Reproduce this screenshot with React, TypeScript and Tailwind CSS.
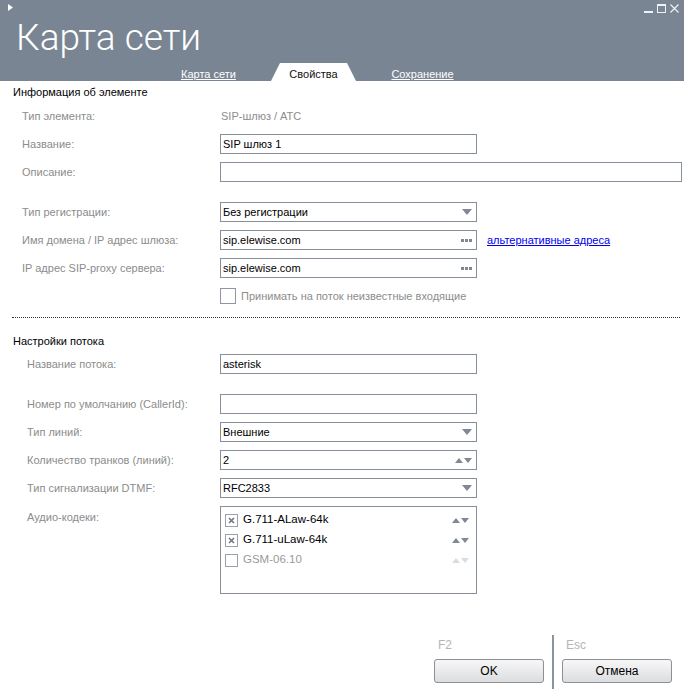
import React from "react";

const font = "font-['Liberation_Sans',Arial,sans-serif]";

function DownArrow({ light = false }: { light?: boolean }) {
  return (
    <svg width="10" height="6" viewBox="0 0 10 6" className="shrink-0">
      <path d="M0 0h10L5 6z" fill={light ? "#d4d8dd" : "#7f8894"} />
    </svg>
  );
}

function UpDown({ light = false }: { light?: boolean }) {
  const c = light ? "#d9dde2" : "#7f8894";
  return (
    <svg width="17" height="6" viewBox="0 0 17 6" className="shrink-0">
      <path d="M0 6L4 1l4 5z" fill={c} />
      <path d="M9 1h8l-4 5z" fill={c} />
    </svg>
  );
}

function Dots() {
  return (
    <svg width="11" height="3" viewBox="0 0 11 3" className="shrink-0">
      <rect x="0" y="0" width="3" height="3" fill="#7f8894" />
      <rect x="4" y="0" width="3" height="3" fill="#7f8894" />
      <rect x="8" y="0" width="3" height="3" fill="#7f8894" />
    </svg>
  );
}

function Field({
  value = "",
  wide = false,
  right,
}: {
  value?: string;
  wide?: boolean;
  right?: React.ReactNode;
}) {
  return (
    <div
      className={`flex h-[20px] items-center border border-[#858e99] bg-white pl-[2px] pr-[4px] text-[11px] text-black ${
        wide ? "w-[462px]" : "w-[257px]"
      }`}
    >
      <span className="flex-1 truncate">{value}</span>
      {right}
    </div>
  );
}

function Row({
  label,
  indent = "section1",
  children,
}: {
  label: string;
  indent?: "section1" | "section2";
  children?: React.ReactNode;
}) {
  return (
    <div className="flex h-[28px] items-center">
      <div
        className={`shrink-0 text-[11px] text-[#8c8c8c] ${
          indent === "section1" ? "w-[220px] pl-[22px]" : "w-[220px] pl-[27px]"
        }`}
      >
        {label}
      </div>
      {children}
    </div>
  );
}

function CodecItem({
  name,
  checked,
  disabled = false,
}: {
  name: string;
  checked: boolean;
  disabled?: boolean;
}) {
  return (
    <div className="flex h-[20px] items-center pl-[4px] pr-[7px]">
      <div className="flex h-[13px] w-[13px] items-center justify-center border border-[#9aa1aa] bg-white">
        {checked && (
          <svg width="7" height="7" viewBox="0 0 7 7">
            <path d="M1 1l5 5M6 1L1 6" stroke="#6f7680" strokeWidth="1.6" />
          </svg>
        )}
      </div>
      <span
        className={`ml-[5px] flex-1 text-[11.5px] ${disabled ? "text-[#9a9a9a]" : "text-black"}`}
      >
        {name}
      </span>
      <UpDown light={disabled} />
    </div>
  );
}

function Tab({ label, active = false }: { label: string; active?: boolean }) {
  if (active) {
    return (
      <div className="flex h-[18px] w-[85px] items-end justify-center bg-white text-[11px] leading-[14px] text-[#111] [clip-path:polygon(9px_0,76px_0,100%_100%,0_100%)]">
        {label}
      </div>
    );
  }
  return (
    <div className="flex h-[18px] w-[85px] items-end justify-center whitespace-nowrap text-[11px] leading-[14px] text-white underline">
      {label}
    </div>
  );
}

function Button({ label }: { label: string }) {
  return (
    <div className="flex h-[24px] w-[110px] items-center justify-center rounded-[3px] border border-[#8c9096] bg-gradient-to-b from-[#f7f7f7] to-[#dcdde0] text-[12px] text-black">
      {label}
    </div>
  );
}

export default function App() {
  return (
    <div className={`flex h-[694px] w-[684px] flex-col overflow-hidden bg-white ${font}`}>
      {/* Header */}
      <div className="flex h-[81px] shrink-0 flex-col bg-[#7a8594]">
        <div className="flex h-[18px] items-start justify-between pl-[8px] pr-[5px] pt-[4px]">
          <svg width="5" height="7" viewBox="0 0 5 7">
            <path d="M0 0l5 3.5L0 7z" fill="#ffffff" />
          </svg>
          <div className="flex items-center gap-[4px]">
            <svg width="9" height="9" viewBox="0 0 9 9">
              <rect x="0" y="7" width="9" height="2" fill="#eef0f3" />
            </svg>
            <svg width="9" height="9" viewBox="0 0 9 9">
              <rect x="0.5" y="0.5" width="8" height="8" fill="none" stroke="#eef0f3" strokeWidth="1" />
              <rect x="0" y="0" width="9" height="2" fill="#eef0f3" />
            </svg>
            <svg width="9" height="9" viewBox="0 0 9 9">
              <path d="M0.5 0.5l8 8M8.5 0.5l-8 8" stroke="#eef0f3" strokeWidth="1.2" />
            </svg>
          </div>
        </div>
        <div className="h-[40px] pl-[16px] font-['Roboto',sans-serif] text-[37px] font-light leading-[40px] text-white">
          Карта сети
        </div>
        <div className="mt-auto flex h-[18px] items-end pl-[166px]">
          <Tab label="Карта сети" />
          <div className="w-[20px]" />
          <Tab label="Свойства" active />
          <div className="w-[24px]" />
          <Tab label="Сохранение" />
        </div>
      </div>

      {/* Информация об элементе */}
      <div className="flex h-[23px] items-center pl-[13px] text-[11px] text-black">
        Информация об элементе
      </div>
      <div className="mt-[-2px]" />
      <Row label="Тип элемента:">
        <span className="pl-[1px] text-[11px] text-[#8c8c8c]">SIP-шлюз / АТС</span>
      </Row>
      <Row label="Название:">
        <Field value="SIP шлюз 1" />
      </Row>
      <Row label="Описание:">
        <Field wide />
      </Row>
      <div className="h-[12px]" />
      <Row label="Тип регистрации:">
        <Field value="Без регистрации" right={<DownArrow />} />
      </Row>
      <Row label="Имя домена / IP адрес шлюза:">
        <Field value="sip.elewise.com" right={<Dots />} />
        <span className="ml-[10px] text-[11px] text-[#0000ee] underline">
          альтернативные адреса
        </span>
      </Row>
      <Row label="IP адрес SIP-proxy сервера:">
        <Field value="sip.elewise.com" right={<Dots />} />
      </Row>
      <div className="flex h-[28px] items-center pl-[220px]">
        <div className="h-[16px] w-[16px] border border-[#8f969f] bg-white" />
        <span className="ml-[5px] text-[11px] text-[#8c8c8c]">
          Принимать на поток неизвестные входящие
        </span>
      </div>

      <div className="ml-[12px] mr-[4px] mt-[7px] border-t border-dotted border-[#333]" />

      {/* Настройки потока */}
      <div className="mt-[14px] flex h-[18px] items-center pl-[13px] text-[11px] text-black">
        Настройки потока
      </div>
      <Row label="Название потока:" indent="section2">
        <Field value="asterisk" />
      </Row>
      <div className="h-[12px]" />
      <Row label="Номер по умолчанию (CallerId):" indent="section2">
        <Field />
      </Row>
      <Row label="Тип линий:" indent="section2">
        <Field value="Внешние" right={<DownArrow />} />
      </Row>
      <Row label="Количество транков (линий):" indent="section2">
        <Field value="2" right={<UpDown />} />
      </Row>
      <Row label="Тип сигнализации DTMF:" indent="section2">
        <Field value="RFC2833" right={<DownArrow />} />
      </Row>
      <div className="mt-[4px] flex items-start">
        <div className="w-[220px] shrink-0 pl-[27px] pt-[3px] text-[11px] text-[#8c8c8c]">
          Аудио-кодеки:
        </div>
        <div className="flex h-[88px] w-[257px] flex-col border border-[#858e99] bg-white pt-[3px]">
          <CodecItem name="G.711-ALaw-64k" checked />
          <CodecItem name="G.711-uLaw-64k" checked />
          <CodecItem name="GSM-06.10" checked={false} disabled />
        </div>
      </div>

      {/* Footer */}
      <div className="mt-[43px] flex justify-end pr-[12px]">
        <div className="flex w-[110px] flex-col">
          <span className="h-[22px] pl-[4px] text-[12px] leading-[16px] text-[#b5b5b5]">F2</span>
          <Button label="OK" />
        </div>
        <div className="mx-[8px] mt-[-2px] h-[54px] w-[2px] bg-[#8a939e]" />
        <div className="flex w-[110px] flex-col">
          <span className="h-[22px] pl-[4px] text-[12px] leading-[16px] text-[#b5b5b5]">Esc</span>
          <Button label="Отмена" />
        </div>
      </div>
    </div>
  );
}
